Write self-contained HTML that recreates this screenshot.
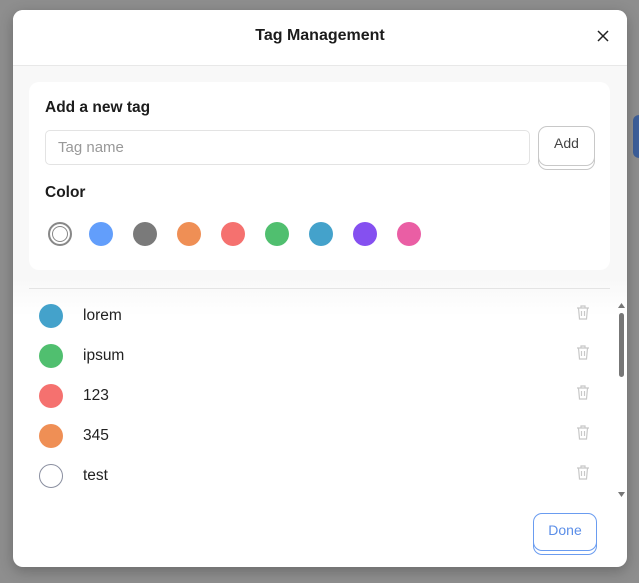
<!DOCTYPE html>
<html><head><style>
*{box-sizing:border-box;margin:0;padding:0}
body{width:639px;height:583px;background:#8e8e8e;font-family:"Liberation Sans",sans-serif;position:relative;overflow:hidden}
.tab{position:absolute;left:633px;top:115px;width:20px;height:43px;background:#3d5f9a;border-radius:6px}
.modal{position:absolute;left:13px;top:10px;width:614px;height:557px;background:#fff;border-radius:10px;overflow:hidden;box-shadow:0 4px 14px rgba(0,0,0,.25)}
.bgz{position:absolute;left:0;top:56px;width:614px;height:250px;background:linear-gradient(#f8f8f8 85%,#fff)}
.hdr{position:relative;height:56px;background:#fff;border-bottom:1px solid #e8e8e8;text-align:center;line-height:52px;font-weight:bold;font-size:16px;color:#1c1c1c}
.x{position:absolute;left:584px;top:20px}
.card{position:absolute;left:16px;top:72px;width:581px;height:188px;background:#fff;border-radius:10px}
.h{position:absolute;left:16px;font-weight:bold;font-size:15.5px;color:#1c1c1c}
.inp{position:absolute;left:16px;top:48px;width:485px;height:35px;border:1px solid #e3e3e3;border-radius:5px;color:#999;font-size:15px;line-height:33px;padding-left:12px}
.add{position:absolute;left:509px;top:44px;width:57px;height:40px;border:1px solid #c8c8c8;border-radius:9px;box-shadow:0 4px 0 -1px #fff,0 4px 0 0 #c8c8c8;text-align:center;line-height:32px;font-size:14px;color:#444;background:#fff}
.dot{position:absolute;width:24px;height:24px;border-radius:50%;top:140px}
.div{position:absolute;left:16px;top:278px;width:581px;height:1px;background:#e4e4e4}
.list{position:absolute;left:0;top:285px;width:614px;height:205px}
.row{position:absolute;left:0;height:40px;width:600px}
.row .c{position:absolute;left:26px;top:9px;width:24px;height:24px;border-radius:50%}
.row .t{position:absolute;left:70px;top:12px;font-size:15.5px;color:#222}
.row svg{position:absolute;left:562px;top:9px}
.sb{position:absolute;left:606px;width:5px;height:64px;background:#777;border-radius:3px}
.done{position:absolute;left:520px;top:503px;width:64px;height:38px;border:1px solid #6a9cf0;border-radius:9px;box-shadow:0 4px 0 -1px #fff,0 4px 0 0 #6a9cf0;text-align:center;line-height:32px;font-size:14px;color:#5b8ee8;background:#fff}
</style></head><body>
<div class="tab"></div>
<div class="modal">
<div class="bgz"></div>
<div class="hdr">Tag Management</div>
<svg class="x" width="12" height="12" viewBox="0 0 12 12"><path d="M1 1L11 11M11 1L1 11" stroke="#222" stroke-width="1.5"/></svg>
<div class="card">
<div class="h" style="top:17px">Add a new tag</div>
<div class="inp">Tag name</div>
<div class="add">Add</div>
<div class="h" style="top:102px">Color</div>
<div class="dot" style="left:19px;border:2px solid #888;box-shadow:inset 0 0 0 2px #fff,inset 0 0 0 3px #888"></div>
<div class="dot" style="left:60px;background:#629efb"></div>
<div class="dot" style="left:104px;background:#7a7a7a"></div>
<div class="dot" style="left:148px;background:#ef8f55"></div>
<div class="dot" style="left:192px;background:#f5716f"></div>
<div class="dot" style="left:236px;background:#50bf6f"></div>
<div class="dot" style="left:280px;background:#44a2cb"></div>
<div class="dot" style="left:324px;background:#8550f0"></div>
<div class="dot" style="left:368px;background:#ea5ea4"></div>
</div>
<div class="div"></div>
<div class="list">
<div class="row" style="top:0px"><div class="c" style="background:#44a2cb"></div><div class="t">lorem</div><svg width="16" height="17" viewBox="0 0 16 17"><path d="M2 4h12M6 4V2h4v2M3.5 4l1 11h7l1-11M6.5 7v5M9.5 7v5" fill="none" stroke="#c8c8c8" stroke-width="1.2"/></svg></div>
<div class="row" style="top:40px"><div class="c" style="background:#50bf6f"></div><div class="t">ipsum</div><svg width="16" height="17" viewBox="0 0 16 17"><path d="M2 4h12M6 4V2h4v2M3.5 4l1 11h7l1-11M6.5 7v5M9.5 7v5" fill="none" stroke="#c8c8c8" stroke-width="1.2"/></svg></div>
<div class="row" style="top:80px"><div class="c" style="background:#f5716f"></div><div class="t">123</div><svg width="16" height="17" viewBox="0 0 16 17"><path d="M2 4h12M6 4V2h4v2M3.5 4l1 11h7l1-11M6.5 7v5M9.5 7v5" fill="none" stroke="#c8c8c8" stroke-width="1.2"/></svg></div>
<div class="row" style="top:120px"><div class="c" style="background:#ef8f55"></div><div class="t">345</div><svg width="16" height="17" viewBox="0 0 16 17"><path d="M2 4h12M6 4V2h4v2M3.5 4l1 11h7l1-11M6.5 7v5M9.5 7v5" fill="none" stroke="#c8c8c8" stroke-width="1.2"/></svg></div>
<div class="row" style="top:160px"><div class="c" style="border:1px solid #8a8fa0"></div><div class="t">test</div><svg width="16" height="17" viewBox="0 0 16 17"><path d="M2 4h12M6 4V2h4v2M3.5 4l1 11h7l1-11M6.5 7v5M9.5 7v5" fill="none" stroke="#c8c8c8" stroke-width="1.2"/></svg></div>
</div>
<svg style="position:absolute;left:605px;top:293px" width="7" height="6"><path d="M0 5L3.5 0L7 5z" fill="#777"/></svg>
<svg style="position:absolute;left:605px;top:482px" width="7" height="6"><path d="M0 0L3.5 5L7 0z" fill="#777"/></svg>
<div class="sb" style="top:303px"></div>
<div class="done">Done</div>
</div>
</body></html>
